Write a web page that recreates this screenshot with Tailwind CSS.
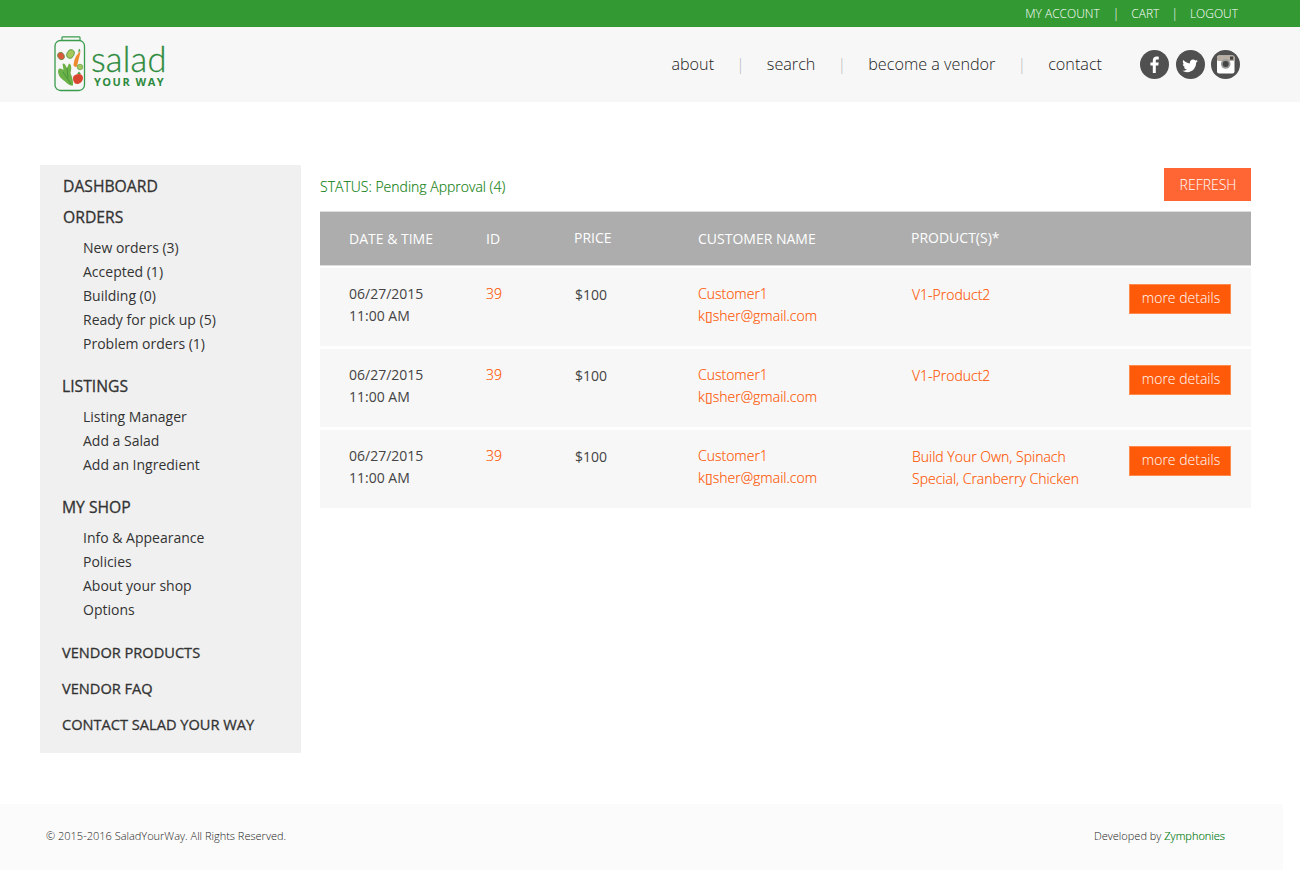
<!DOCTYPE html>
<html><head><meta charset="utf-8"><script src="https://cdn.jsdelivr.net/npm/@tailwindcss/browser@4"></script></head>
<body class="bg-white font-['Open_Sans',sans-serif] text-[#333] overflow-hidden h-[872px]">
<div class="h-[27px] bg-[#339933] flex justify-end items-center pr-[62px] text-white text-[12px] font-light">
  <a>MY ACCOUNT</a><span class="ml-[13px] mr-[12px]">|</span><a>CART</a><span class="mx-[12px]">|</span><a>LOGOUT</a>
</div>
<header class="h-[75px] bg-[#f7f7f7] flex items-center justify-between pl-[54px] pr-[60px]">
  <div class="flex items-start gap-[5px] h-[56px] mt-[-2px]">
    <svg width="32" height="56" viewBox="0 0 32 56" fill="none">
      <path d="M8 4.500V1.500C8 1 8.500 .800 9 .800H25C25.500 .800 26 1 26 1.500V4.500" stroke="#3a9c4c" stroke-width="1.200"/>
      <rect x="1" y="4.500" width="29.500" height="50" rx="5.500" stroke="#3a9c4c" stroke-width="1.300"/>
      <ellipse cx="7" cy="20" rx="3.200" ry="3.800" fill="#d9593a" stroke="#5c8a3a" stroke-width=".7" transform="rotate(-25 7 20)"/>
      <ellipse cx="16.500" cy="18" rx="3.500" ry="4.500" fill="#a4c65a" stroke="#4d9a40" stroke-width=".8" transform="rotate(25 16.500 18)"/>
      <path d="M25.500 15L24 30.500C23 31.500 21.500 31 20.500 30C20 25 21 19 25.500 15Z" fill="#ee8a2e" transform="rotate(8 23 23)"/>
      <path d="M25 12.500L26.500 14.500L24 17Z" fill="#4d9a40"/>
      <circle cx="26" cy="31" r="2.800" fill="#a4c65a" stroke="#4d9a40" stroke-width=".6"/>
      <path d="M4 35C5 31 8 33 9.500 34L8.500 28C10.500 26 12 30 13 32L15 27.500C18 28 17.500 34 16.500 37C18 41 19.500 45 19 49.500C15 50 13 47 10.500 45C7.500 43 4 40 4 35Z" fill="#6cb048"/>
      <path d="M9 36L17 48M13 32L14 42" stroke="#3f8f3a" stroke-width=".8"/>
      <path d="M19.500 40C23 37 29 37 29 42C28.500 47 24 49 21 47.500C19 45.500 18.500 42.500 19.500 40Z" fill="#d9462f"/>
      <path d="M23 38L25 35.500L27 38Z" fill="#4d9a40"/>
    </svg>
    <div class="flex flex-col items-start mt-[6px]">
      <span class="text-[34.500px] leading-[33px] h-[33px] text-[#2e8b3e] font-['Lato',sans-serif] tracking-[0.2px] [-webkit-text-stroke:0.3px] font-light">salad</span>
      <span class="text-[11px] leading-[12px] font-bold text-[#2e8b3e] tracking-[1.5px] ml-[3px] mt-[1px]">YOUR WAY</span>
    </div>
  </div>
  <div class="flex items-center">
    <nav class="flex items-center text-[16.2px] font-light text-[#222] mb-[1px]">
      <a>about</a><span class="mx-[22px] text-[#bbb]">|</span><a>search</a><span class="mx-[22px] text-[#bbb]">|</span><a>become a vendor</a><span class="mx-[22px] text-[#bbb]">|</span><a>contact</a>
    </nav>
    <div class="flex gap-[6.5px] ml-[38px]">
      <svg width="29" height="29" viewBox="0 0 29 29"><circle cx="14.500" cy="14.500" r="14.500" fill="#505050"/><path d="M15.800 23V15.500H18.300L18.700 12.500H15.800V10.800C15.800 9.900 16.100 9.400 17.300 9.400H18.800V6.700C18.300 6.600 17.500 6.500 16.600 6.500C14.400 6.500 12.800 7.900 12.800 10.400V12.500H10.400V15.500H12.800V23Z" fill="#fff"/></svg>
      <svg width="29" height="29" viewBox="0 0 29 29"><circle cx="14.500" cy="14.500" r="14.500" fill="#505050"/><g transform="translate(3.500 3.800) scale(.76)"><path d="M24 9.300C23.300 9.600 22.500 9.900 21.700 10C22.500 9.500 23.200 8.700 23.500 7.800C22.700 8.300 21.800 8.600 20.900 8.800C20.100 8 19 7.500 17.800 7.500C15.500 7.500 13.600 9.400 13.600 11.700C13.600 12 13.600 12.400 13.700 12.700C10.200 12.500 7.100 10.800 5 8.300C4.600 8.900 4.400 9.700 4.400 10.400C4.400 11.900 5.100 13.200 6.300 13.900C5.600 13.900 5 13.700 4.400 13.400C4.400 15.500 5.900 17.200 7.800 17.600C7.200 17.800 6.500 17.800 5.900 17.700C6.400 19.400 8 20.600 9.800 20.600C8 22 5.800 22.600 3.700 22.400C5.600 23.600 7.800 24.200 10.100 24.200C17.700 24.200 21.800 17.900 21.800 12.500V11.900C22.700 11.300 23.400 10.400 24 9.300Z" fill="#fff"/></g></svg>
      <svg width="29" height="29" viewBox="0 0 29 29"><circle cx="14.500" cy="14.500" r="14.500" fill="#505050"/><rect x="6" y="5.500" width="17.500" height="18" rx="2" fill="#fff"/><rect x="6" y="5.500" width="17.500" height="5.500" rx="1.500" fill="#b8aea4"/><rect x="19" y="6.500" width="3.200" height="3.200" fill="#444"/><circle cx="14.700" cy="14" r="4.800" fill="#999"/><circle cx="14.700" cy="14" r="3" fill="#444"/></svg>
    </div>
  </div>
</header>
<div class="flex items-start mt-[63px] ml-[40px] w-[1211px] gap-[19px]">
  <aside class="w-[261px] h-[588px] bg-[#f0f0f0] shrink-0 pt-[9px] text-[#333]">
    <div class="pl-[23px] text-[15.7px] leading-[24px] [-webkit-text-stroke:0.3px]">DASHBOARD</div>
    <div class="pl-[23px] mt-[7px] text-[15.7px] leading-[24px] [-webkit-text-stroke:0.3px]">ORDERS</div>
    <ul class="pl-[43px] mt-[7px] text-[14px] leading-[24px]">
      <li>New orders (3)</li><li>Accepted (1)</li><li>Building (0)</li><li>Ready for pick up (5)</li><li>Problem orders (1)</li>
    </ul>
    <div class="pl-[22px] mt-[18px] text-[15.7px] leading-[24px] [-webkit-text-stroke:0.3px]">LISTINGS</div>
    <ul class="pl-[43px] mt-[7px] text-[14px] leading-[24px]">
      <li>Listing Manager</li><li>Add a Salad</li><li>Add an Ingredient</li>
    </ul>
    <div class="pl-[22px] mt-[18px] text-[15.7px] leading-[24px] [-webkit-text-stroke:0.3px]">MY SHOP</div>
    <ul class="pl-[43px] mt-[7px] text-[14px] leading-[24px]">
      <li>Info &amp; Appearance</li><li>Policies</li><li>About your shop</li><li>Options</li>
    </ul>
    <div class="pl-[22px] mt-[18px] text-[14.6px] leading-[24px] [-webkit-text-stroke:0.3px]">VENDOR PRODUCTS</div>
    <div class="pl-[22px] mt-[12px] text-[14.6px] leading-[24px] [-webkit-text-stroke:0.3px]">VENDOR FAQ</div>
    <div class="pl-[22px] mt-[12px] text-[14.6px] leading-[24px] [-webkit-text-stroke:0.3px]">CONTACT SALAD YOUR WAY</div>
  </aside>
  <main class="flex-1 min-w-0">
    <div class="flex justify-between items-center h-[36px] mt-[3px]">
      <span class="text-[14px] text-[#128012] font-light mt-[1px] [-webkit-text-stroke:0.15px]">STATUS: Pending Approval (4)</span>
      <button class="w-[87px] h-[33px] pl-[1px] bg-[#ff6633] text-white text-[14px] font-light mb-[3px]">REFRESH</button>
    </div>
    <div class="h-[55px] mt-[7px] bg-[#adadad] border-y border-y-[#dddddd] text-white text-[14px] font-normal grid grid-cols-[137px_88px_124px_213px_1fr] items-center pl-[29px]">
      <span class="-mt-[1px]">DATE &amp; TIME</span><span class="-mt-[1px]">ID</span><span class="-mt-[3px]">PRICE</span><span class="-mt-[1px]">CUSTOMER NAME</span><span class="-mt-[3px]">PRODUCT(S)*</span>
    </div>
    <div class="flex flex-col gap-[3px] mt-[2px]">
      <div class="h-[78px] bg-[#f7f7f7] text-[14px] leading-[22px] font-light grid grid-cols-[137px_89px_123px_214px_218px_1fr] pl-[29px] pt-[15px]">
        <div class="text-[#444] font-normal">06/27/2015<br>11:00 AM</div><div class="text-[#ff5500] [-webkit-text-stroke:0.15px]">39</div><div class="text-[#444] font-normal pt-[1px]">$100</div>
        <div class="text-[#ff5500] [-webkit-text-stroke:0.15px]">Customer1<br>k▯sher@gmail.com</div><div class="text-[#ff5500] pt-[1px] [-webkit-text-stroke:0.15px]">V1-Product2</div>
        <div><button class="block mt-[1px] -ml-[1px] w-[102px] h-[30px] pb-[2px] pl-[2px] bg-[#ff5a0a] border border-[#ff8a4d] text-white text-[14px] font-light">more details</button></div>
      </div>
      <div class="h-[78px] bg-[#f7f7f7] text-[14px] leading-[22px] font-light grid grid-cols-[137px_89px_123px_214px_218px_1fr] pl-[29px] pt-[15px]">
        <div class="text-[#444] font-normal">06/27/2015<br>11:00 AM</div><div class="text-[#ff5500] [-webkit-text-stroke:0.15px]">39</div><div class="text-[#444] font-normal pt-[1px]">$100</div>
        <div class="text-[#ff5500] [-webkit-text-stroke:0.15px]">Customer1<br>k▯sher@gmail.com</div><div class="text-[#ff5500] pt-[1px] [-webkit-text-stroke:0.15px]">V1-Product2</div>
        <div><button class="block mt-[1px] -ml-[1px] w-[102px] h-[30px] pb-[2px] pl-[2px] bg-[#ff5a0a] border border-[#ff8a4d] text-white text-[14px] font-light">more details</button></div>
      </div>
      <div class="h-[78px] bg-[#f7f7f7] text-[14px] leading-[22px] font-light grid grid-cols-[137px_89px_123px_214px_218px_1fr] pl-[29px] pt-[15px]">
        <div class="text-[#444] font-normal">06/27/2015<br>11:00 AM</div><div class="text-[#ff5500] [-webkit-text-stroke:0.15px]">39</div><div class="text-[#444] font-normal pt-[1px]">$100</div>
        <div class="text-[#ff5500] [-webkit-text-stroke:0.15px]">Customer1<br>k▯sher@gmail.com</div><div class="text-[#ff5500] pt-[1px] [-webkit-text-stroke:0.15px]">Build Your Own, Spinach<br>Special, Cranberry Chicken</div>
        <div><button class="block mt-[1px] -ml-[1px] w-[102px] h-[30px] pb-[2px] pl-[2px] bg-[#ff5a0a] border border-[#ff8a4d] text-white text-[14px] font-light">more details</button></div>
      </div>
    </div>
  </main>
</div>
<footer class="mt-[51px] w-[1283px] h-[66px] bg-[#fbfbfb] flex justify-between items-center pl-[46px] pr-[58px] pb-[2px] text-[11px] font-light text-[#222]">
  <span>© 2015-2016 SaladYourWay. All Rights Reserved.</span>
  <span>Developed by <span class="text-[#007a10] [-webkit-text-stroke:0.15px]">Zymphonies</span></span>
</footer>
</body></html>
